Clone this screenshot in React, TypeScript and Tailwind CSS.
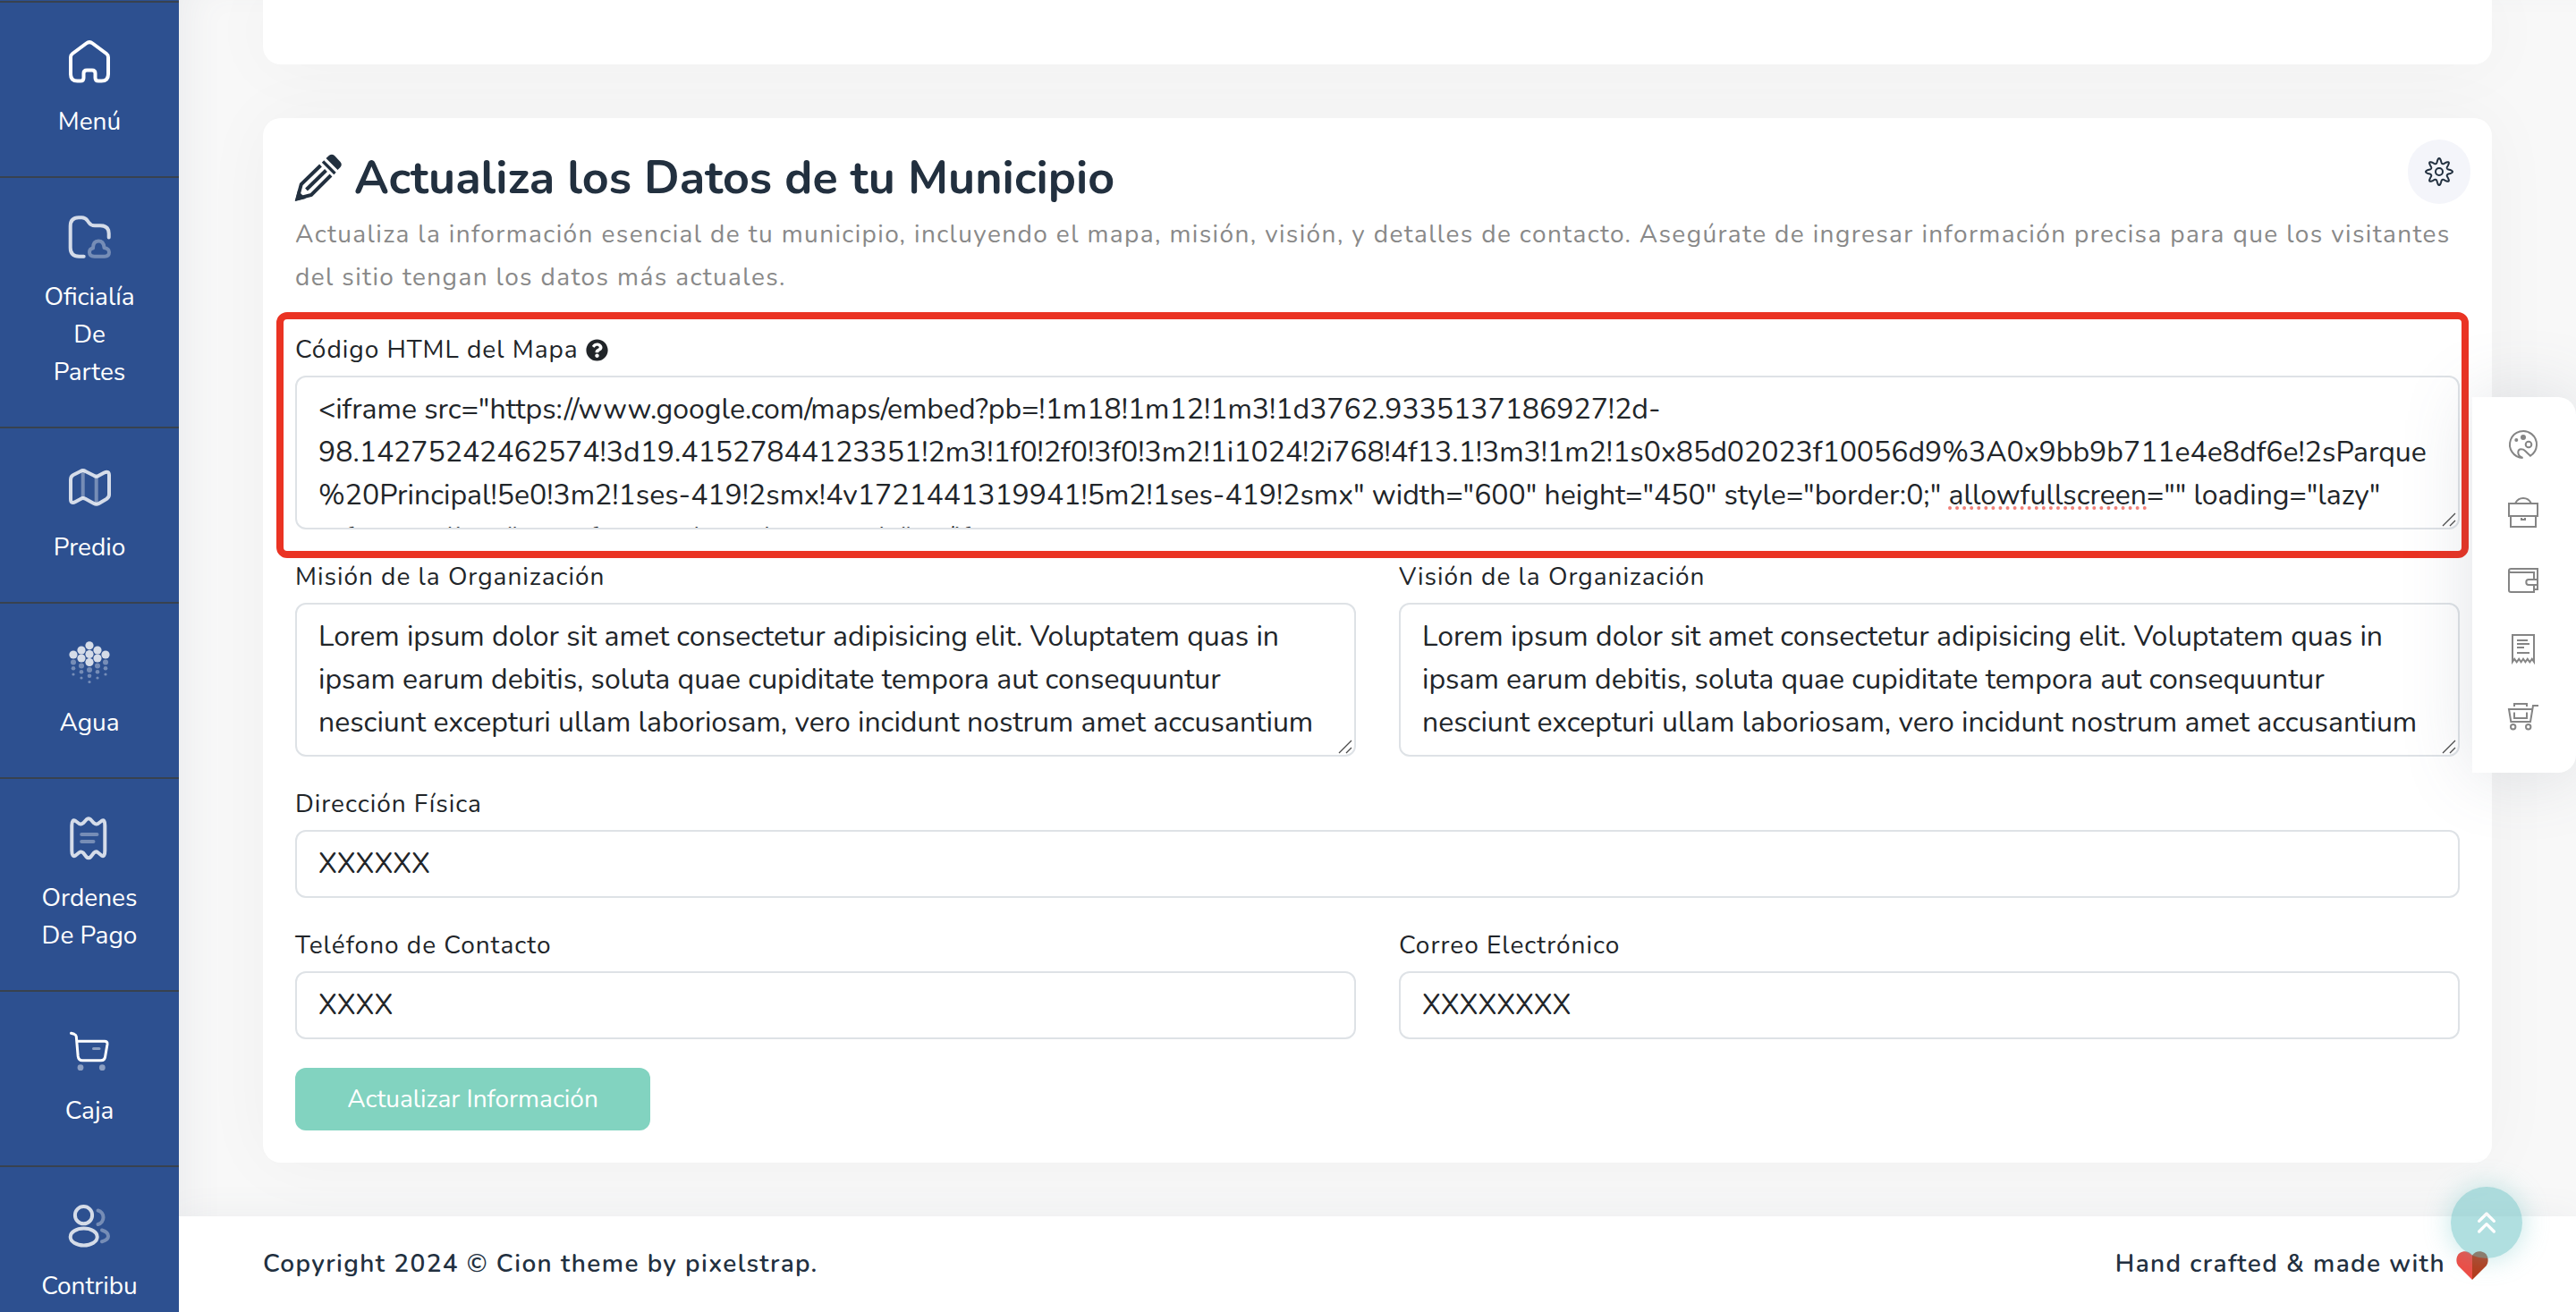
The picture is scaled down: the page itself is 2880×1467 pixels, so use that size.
import React from "react";
import { ChevronsUp } from "lucide-react";
import { FaQuestionCircle } from "react-icons/fa";

const mapCode = `<iframe src="https://www.google.com/maps/embed?pb=!1m18!1m12!1m3!1d3762.9335137186927!2d-
98.14275242462574!3d19.41527844123351!2m3!1f0!2f0!3f0!3m2!1i1024!2i768!4f13.1!3m3!1m2!1s0x85d02023f10056d9%3A0x9bb9b711e4e8df6e!2sParque
%20Principal!5e0!3m2!1ses-419!2smx!4v1721441319941!5m2!1ses-419!2smx" width="600" height="450" style="border:0;" allowfullscreen="" loading="lazy"
referrerpolicy="no-referrer-when-downgrade"></iframe>`;

const lorem = `Lorem ipsum dolor sit amet consectetur adipisicing elit. Voluptatem quas in
ipsam earum debitis, soluta quae cupiditate tempora aut consequuntur
nesciunt excepturi ullam laboriosam, vero incidunt nostrum amet accusantium`;

function MenuIcon({ width = 4, children }: { width?: number; children: React.ReactNode }) {
  return (
    <svg
      viewBox="0 0 48 48"
      className="mb-6 size-12 overflow-visible"
      fill="none"
      stroke="white"
      strokeWidth={width}
      strokeLinecap="round"
      strokeLinejoin="round"
      aria-hidden="true"
    >
      {children}
    </svg>
  );
}

const dropColumns = [
  { x: 6, y: 17 },
  { x: 15, y: 21 },
  { x: 24, y: 25.5 },
  { x: 33, y: 21 },
  { x: 42, y: 17 },
];

const menu = [
  {
    lines: ["Menú"],
    icon: (
      <MenuIcon>
        <path d="M3 21V40Q3 47.5 10.5 47.5H14Q17.5 47.5 17.5 44V39Q17.5 35.5 21 35.5H27Q30.5 35.5 30.5 39V44Q30.5 47.5 34 47.5H37.5Q45 47.5 45 40V21Q45 18.5 43 17L27.5 5.5Q24 2.8 20.5 5.5L5 17Q3 18.5 3 21Z" />
      </MenuIcon>
    ),
  },
  {
    lines: ["Oficialía", "De", "Partes"],
    icon: (
      <MenuIcon>
        <path opacity=".8" d="M17.7 47.7H12.5Q2.7 47.7 2.7 38V14Q2.7 4.3 12 4.3H15.5Q19.5 4.3 22 8L23 9.5Q25.5 13.3 30 13.3H36Q45.7 13.3 45.7 22V26.5" />
        <path opacity=".35" d="M29.5 47.7Q24 47.7 24 43Q24 39 28 38.5Q28 30.5 34 30.5Q40 30.5 40.5 38Q46 39 46 43Q46 47.7 41 47.7Z" />
      </MenuIcon>
    ),
  },
  {
    lines: ["Predio"],
    icon: (
      <MenuIcon>
        <path opacity=".35" d="M16.7 9V36M31.7 15V43" />
        <path opacity=".8" d="M3 17.5V39Q3 45 8.5 42L14 39Q16.7 37.3 19.5 38.8L29 44Q31.7 45.5 34.5 44L43 39Q46 37 46 34V12.5Q46 7 40.5 9.5L34.5 12.8Q31.7 14.5 29 12.8L19.5 8Q16.7 6 14 8L6 12Q3 13.5 3 17.5Z" />
      </MenuIcon>
    ),
  },
  {
    lines: ["Agua"],
    icon: (
      <MenuIcon>
        <g fill="white" stroke="none">
          <g opacity=".8">
            <circle cx="24" cy="6.8" r="4.6" />
            <circle cx="15" cy="12" r="4.6" />
            <circle cx="33" cy="12" r="4.6" />
            <circle cx="24" cy="16.5" r="4.6" />
            {dropColumns.map((c) => (
              <circle key={c.x} cx={c.x} cy={c.y} r="4.6" />
            ))}
          </g>
          <g opacity=".35">
            {dropColumns.map((c) => (
              <g key={c.x}>
                <circle cx={c.x} cy={c.y + 8.6} r="3" />
                <circle cx={c.x} cy={c.y + 15.3} r="2.3" />
                <circle cx={c.x} cy={c.y + 22} r="1.6" />
              </g>
            ))}
          </g>
        </g>
      </MenuIcon>
    ),
  },
  {
    lines: ["Ordenes", "De Pago"],
    icon: (
      <MenuIcon>
        <path opacity=".8" d="M4.3 12Q4.3 4.5 8.5 7L12.5 10Q14.7 11.3 17 9.3L20.5 5.5Q23 3 25.5 5.5L29 9.3Q31.3 11.3 33.5 10L37.5 7Q41.3 4.5 41.3 12V40Q41.3 48 37.5 45.5L33.5 42.3Q31.3 40.5 29 42.5L25.5 47Q23 49.5 20.5 47L17 42.5Q14.7 40.5 12.5 42.3L8.5 45.5Q4.3 48 4.3 40Z" />
        <path opacity=".35" d="M15.2 22H32.5M15.2 30H28.5" />
      </MenuIcon>
    ),
  },
  {
    lines: ["Caja"],
    icon: (
      <MenuIcon width={3}>
        <path d="M3.5 6.3L7 7.3Q9 8 9.3 10L11.2 32Q11.8 36.7 16 36.7H37Q41 36.7 41.5 33L44 18.5Q44.3 15.3 41 15.3H10" />
        <path opacity=".45" d="M28.5 23.5H35" />
        <g opacity=".45" fill="white" stroke="none">
          <circle cx="14" cy="44.7" r="3.4" />
          <circle cx="38.3" cy="44.7" r="3.4" />
        </g>
      </MenuIcon>
    ),
  },
  {
    lines: ["Contribu"],
    icon: (
      <MenuIcon>
        <g opacity=".8">
          <circle cx="17.5" cy="13.7" r="9.6" />
          <ellipse cx="17.7" cy="38" rx="15" ry="9.5" />
        </g>
        <path opacity=".35" d="M33.5 8.5A8 8 0 0 1 33.5 24M38 30.5Q45 32.5 45 37.3Q45 41.5 38 43.3" />
      </MenuIcon>
    ),
  },
];

function ToolIcon({ children }: { children: React.ReactNode }) {
  return (
    <svg
      viewBox="0 0 34 34"
      className="block size-[34px] overflow-visible"
      fill="none"
      stroke="#858585"
      strokeWidth="2"
      aria-hidden="true"
    >
      {children}
    </svg>
  );
}

const tools = [
  {
    label: "Tema",
    icon: (
      <ToolIcon>
        <path d="M25 29.7A15 15 0 1 0 16.5 32Q11.3 30 11.3 26Q11.3 22.3 14.5 22.3Q17.5 22.3 19 24Z" />
        <circle cx="23" cy="17" r="3.3" />
        <circle cx="17" cy="9" r="3" fill="#858585" stroke="none" />
        <circle cx="9.3" cy="12" r="2" fill="#858585" stroke="none" />
      </ToolIcon>
    ),
  },
  {
    label: "Maletín",
    icon: (
      <ToolIcon>
        <path d="M1 7H33V21H1ZM3 21V33H31V21M8.3 6.5Q11 1 17 1Q23 1 25.7 6.5M15 23V25H19V23" />
      </ToolIcon>
    ),
  },
  {
    label: "Cartera",
    icon: (
      <ToolIcon>
        <path d="M29 16V8H3.500Q1 8 1 6Q1 4 3.500 4H33V27H29M1 6V28Q1 30 3.300 30H29V22M33 16H23Q20.300 16 20.300 19Q20.300 22 23 22H33" />
      </ToolIcon>
    ),
  },
  {
    label: "Recibos",
    icon: (
      <ToolIcon>
        <path d="M5 32V2H29V32L26.8 28.8L24.3 32.3L21.8 28.8L19.4 32.3L17 28.8L14.6 32.3L12.2 28.8L9.7 32.3L7.2 28.8Z" />
        <path d="M10 8H22M10 12H24M10 16H18M10 22H24" />
      </ToolIcon>
    ),
  },
  {
    label: "Carrito",
    icon: (
      <ToolIcon>
        <path d="M34 5H28L25 23H3.3L1 9H27M7 6V3H21V6M7 12.5V19H21V12.5" />
        <circle cx="5.7" cy="28.7" r="2.7" />
        <circle cx="22.7" cy="28.7" r="2.7" />
      </ToolIcon>
    ),
  },
];

const gearPath =
  Array.from({ length: 160 }, (_, i) => {
    const a = (i / 160) * Math.PI * 2;
    const r = 9.6 + 5.4 * Math.pow((1 + Math.cos(8 * a)) / 2, 1.5);
    return `${i ? "L" : "M"}${(16 + r * Math.cos(a)).toFixed(2)} ${(16 + r * Math.sin(a)).toFixed(2)}`;
  }).join("") + "Z";

const fieldClass =
  "block w-full rounded-xl border-2 border-[#dee2e6] bg-transparent px-6 py-3 text-[32px] leading-[48px] text-[#212529] outline-none";

const labelClass = "mb-2 flex items-center gap-2 text-[28px] leading-[42px] tracking-[1px] text-[#212529]";

function TextField({ id, label, value }: { id: string; label: string; value: string }) {
  return (
    <div>
      <label htmlFor={id} className={labelClass}>
        {label}
      </label>
      <input id={id} type="text" defaultValue={value} className={fieldClass} />
    </div>
  );
}

function TextArea({
  id,
  label,
  value,
  help,
  children,
}: {
  id: string;
  label: string;
  value: string;
  help?: boolean;
  children?: React.ReactNode;
}) {
  return (
    <div>
      <label htmlFor={id} className={labelClass}>
        {label}
        {help && <FaQuestionCircle className="size-[25px]" />}
      </label>
      <div className="relative">
        <textarea
          id={id}
          rows={3}
          spellCheck={false}
          defaultValue={value}
          className={`${fieldClass} resize-none overflow-hidden whitespace-pre`}
        />
        {children}
        <svg
          viewBox="0 0 16 16"
          className="pointer-events-none absolute right-1 bottom-[3px] size-4"
          stroke="#4b4b4b"
          strokeWidth="1.3"
          aria-hidden="true"
        >
          <path d="M1 15L15 1M9 15L15 9" />
        </svg>
      </div>
    </div>
  );
}

function Sidebar() {
  return (
    <nav className="sticky top-0 z-10 h-screen w-[200px] shrink-0 overflow-hidden bg-[#2d5090] pt-px">
      <ul className="border-t-2 border-[#38424f]">
        {menu.map((item) => (
          <li key={item.lines[0]} className="border-b-2 border-[#38424f]">
            <a href="#" className="flex flex-col items-center py-10 text-[28px] leading-[42px] text-white">
              {item.icon}
              {item.lines.map((line) => (
                <span key={line}>{line}</span>
              ))}
            </a>
          </li>
        ))}
      </ul>
    </nav>
  );
}

export default function App() {
  return (
    <div className="flex min-h-screen bg-[#f8f8f8] font-['Nunito','Open_Sans',sans-serif]">
      <Sidebar />
      <div className="flex min-w-0 grow flex-col shadow-[inset_30px_0_40px_-20px_rgba(89,102,122,0.08)]">
        <main className="grow pr-[94px] pl-[94px]">
          <div className="h-[72px] rounded-b-[20px] bg-white shadow-[0_0_80px_rgba(0,0,0,0.04)]" />
          <section className="relative mt-[60px] mb-[60px] rounded-[20px] bg-white p-9 shadow-[0_0_80px_rgba(0,0,0,0.04)]">
            <h2 className="mb-2 flex items-center gap-[14px] text-[52px] leading-[62px] font-bold text-[#22303f]">
              <svg viewBox="0 0 52 52" className="size-[52px] overflow-visible" fill="none" stroke="#22303f" aria-hidden="true">
                <path strokeWidth="4" d="M28.5 12L6.8 33L2.5 49L18 45L40 23" />
                <path strokeWidth="4" d="M34.5 17.5L12.5 39" />
                <path strokeWidth="3.4" d="M31 7.5L44.5 21" />
                <path fill="#22303f" stroke="none" d="M0 52L3 40L12 49Z" />
                <path fill="#22303f" stroke="none" d="M34.5 4L38 .8Q41 -1.5 44 1L50.5 8Q53 11 50.5 14L47.5 17Z" />
              </svg>
              Actualiza los Datos de tu Municipio
            </h2>
            <button
              type="button"
              aria-label="Configuración"
              className="absolute top-6 right-6 flex h-[72px] w-[70px] items-center justify-center rounded-full bg-[#f4f5fa]"
            >
              <svg viewBox="0 0 32 32" className="size-8" fill="none" stroke="#22303f" strokeWidth="2" strokeLinejoin="round">
                <path d={gearPath} />
                <circle cx="16" cy="16" r="4" />
              </svg>
            </button>
            <p className="mb-9 text-[28px] leading-[48px] tracking-wider text-[#898989]">
              Actualiza la información esencial de tu municipio, incluyendo el mapa, misión, visión, y detalles de contacto. Asegúrate de ingresar información precisa para que los visitantes del sitio tengan los datos más actuales.
            </p>
            <form className="grid grid-cols-2 gap-x-12 gap-y-8" onSubmit={(e) => e.preventDefault()}>
              <div className="relative col-span-2">
                <div className="pointer-events-none absolute -top-[21px] -right-[10px] -bottom-8 -left-[21px] z-10 rounded-xl border-8 border-[#ea3323]" />
                <TextArea id="mapa" label="Código HTML del Mapa" value={mapCode} help>
                  <div className="pointer-events-none absolute top-[146px] left-[1848px] w-[222px] border-b-4 border-dotted border-[#f08079]" />
                </TextArea>
              </div>
              <TextArea id="mision" label="Misión de la Organización" value={lorem} />
              <TextArea id="vision" label="Visión de la Organización" value={lorem} />
              <div className="col-span-2">
                <TextField id="direccion" label="Dirección Física" value="XXXXXX" />
              </div>
              <TextField id="telefono" label="Teléfono de Contacto" value="XXXX" />
              <TextField id="correo" label="Correo Electrónico" value="XXXXXXXX" />
              <div className="col-span-2">
                <button type="submit" className="block h-[70px] w-[397px] rounded-xl bg-[#82d3c0] text-[28px] leading-[42px] text-white">
                  Actualizar Información
                </button>
              </div>
            </form>
          </section>
        </main>
        <footer className="flex items-center justify-between bg-white px-[94px] pt-8 pb-[33px] text-[28px] leading-[42px] font-semibold tracking-wider text-[#22303f] shadow-[0_0_40px_rgba(89,102,122,0.08)]">
          <p>Copyright 2024 © Cion theme by pixelstrap.</p>
          <p className="flex items-center gap-3">
            Hand crafted &amp; made with
            <svg viewBox="0 0 40 32" className="mt-1 h-8 w-10" aria-label="amor" role="img">
              <path fill="#f04b44" d="M18 32L2.5 16.5C-1 12 0 5 4 2C8.5 -1 14.5 -.5 18 4.5Z" />
              <path fill="#b53a1b" d="M18 32L33.5 16.5C37 12 36 5 32 2C27.5 -1 21.5 -.5 18 4.5Z" />
            </svg>
          </p>
        </footer>
      </div>
      <aside className="fixed top-[444px] right-0 z-20 w-[116px] rounded-r-[20px] bg-white pt-9 pr-[2px] pb-[46px] shadow-[0_0_80px_rgba(89,102,122,0.18)]">
        <ul className="flex flex-col items-center gap-[42px]">
          {tools.map((tool) => (
            <li key={tool.label}>
              <a href="#" aria-label={tool.label} className="block">
                {tool.icon}
              </a>
            </li>
          ))}
        </ul>
      </aside>
      <button
        type="button"
        aria-label="Volver arriba"
        className="fixed right-[60px] bottom-[60px] z-30 flex size-20 items-center justify-center rounded-full bg-[#62bfc1] opacity-50 shadow-[0_0_30px_rgba(98,191,193,0.8)]"
      >
        <ChevronsUp size={40} className="text-white" />
      </button>
    </div>
  );
}
